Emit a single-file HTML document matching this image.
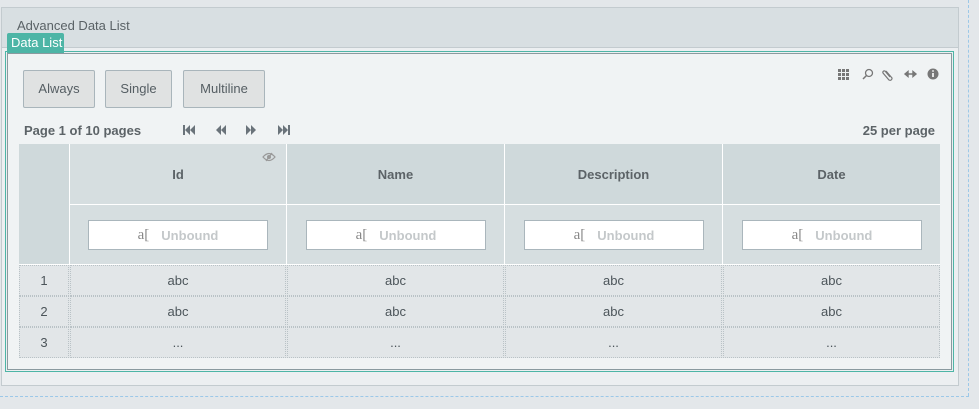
<!DOCTYPE html>
<html><head><meta charset="utf-8"><style>
*{margin:0;padding:0;box-sizing:border-box}
body{width:979px;height:409px;background:#e3e7ea;font-family:"Liberation Sans",sans-serif;position:relative;overflow:hidden}
.a{position:absolute}
.btn{position:absolute;top:70px;height:38px;background:#e0e2e2;border:1px solid #a9b5bb;border-radius:2px;font-size:13px;color:#555e63;display:flex;align-items:center;justify-content:center;padding-bottom:2px}
.c{position:absolute;display:flex;align-items:center;justify-content:center;font-size:13px;color:#4c555a}
.h{font-weight:bold;color:#5c6367}
.inp{position:absolute;top:220px;width:180px;height:30px;background:#fff;border:1px solid #aab6bc;font-size:13px;font-weight:bold;color:#c4c8ca;display:flex;align-items:center;justify-content:center}
.inp i{font-style:normal;font-weight:normal;color:#888;margin-right:12px;font-family:"Liberation Serif",serif;font-size:15px}
</style></head><body>
<div class="a" style="left:968px;top:0;width:0;height:396px;border-left:1px dashed #9cc8e8"></div>
<div class="a" style="left:0;top:396px;width:969px;height:0;border-top:1px dashed #9cc8e8"></div>
<div class="a" style="left:1px;top:7px;width:958px;height:379px;background:#eceff1;border:1px solid #c3cbcf"></div>
<div class="a" style="left:2px;top:8px;width:956px;height:40px;background:#d8dfe2;border-bottom:1px solid #c3cbcf"></div>
<div class="a" style="left:17px;top:18px;font-size:13px;color:#5a6266">Advanced Data List</div>
<div class="a" style="left:5px;top:51px;width:949px;height:321px;border:1px solid #4db5a6"></div>
<div class="a" style="left:7px;top:53px;width:945px;height:317px;border:1px solid #8a9a9f;background:#f0f3f4"></div>
<div class="a" style="left:7px;top:33px;width:57px;height:20px;background:#4db5a6;color:#fff;font-size:13px;padding:2px 0 0 4px;border-radius:2px 2px 0 0">Data List</div>
<div class="btn" style="left:23px;width:72px">Always</div>
<div class="btn" style="left:105px;width:67px">Single</div>
<div class="btn" style="left:183px;width:82px">Multiline</div>
<svg class="a" style="left:838px;top:67px" width="102" height="14" viewBox="0 0 102 14" fill="#777">
<g><rect x="0" y="2" width="3" height="3"/><rect x="4" y="2" width="3" height="3"/><rect x="8" y="2" width="3" height="3"/><rect x="0" y="6" width="3" height="3"/><rect x="4" y="6" width="3" height="3"/><rect x="8" y="6" width="3" height="3"/><rect x="0" y="10" width="3" height="3"/><rect x="4" y="10" width="3" height="3"/><rect x="8" y="10" width="3" height="3"/></g>
<circle cx="31" cy="6" r="3.5" fill="none" stroke="#777" stroke-width="1.3"/><line x1="28.5" y1="8.5" x2="25" y2="12" stroke="#777" stroke-width="1.5"/>
<path d="M48 4 l6 7 a2 2 0 0 1 -3 2 l-6-7 a1.5 1.5 0 0 1 2-2 l5 6" fill="none" stroke="#777" stroke-width="1.2"/>
<path d="M67 7h11M67 7l3-2.5v5zM78 7l-3-2.5v5z" stroke="#777" stroke-width="1.4"/>
<circle cx="95" cy="7" r="5.5"/><rect x="94.2" y="6" width="1.6" height="4" fill="#fff"/><circle cx="95" cy="4" r="0.9" fill="#fff"/>
</svg>
<div class="a" style="left:24px;top:123px;font-size:13px;font-weight:bold;color:#5c6367">Page 1 of 10 pages</div>
<svg class="a" style="left:183px;top:124px" width="110" height="12" viewBox="0 0 110 12" fill="#6a737a">
<rect x="0" y="1" width="2" height="10"/><path d="M2 6l5-5v10zM7 6l5-5v10z"/>
<path d="M33 6l5-5v10zM38 6l5-5v10z"/>
<path d="M63 1l5 5-5 5zM68 1l5 5-5 5z"/>
<path d="M95 1l5 5-5 5zM100 1l5 5-5 5z"/><rect x="105" y="1" width="2" height="10"/>
</svg>
<div class="a" style="right:44px;top:123px;font-size:13px;font-weight:bold;color:#5c6367">25 per page</div>
<div class="a" style="left:19px;top:144px;width:921px;height:214px;background:#fff"></div>
<div class="a" style="left:19px;top:144px;width:50px;height:120px;background:#cfd9db"></div>
<div class="a" style="left:70px;top:144px;width:216px;height:60px;background:#d6dee0"></div>
<div class="a" style="left:287px;top:144px;width:217px;height:60px;background:#cfd9db"></div>
<div class="a" style="left:505px;top:144px;width:217px;height:60px;background:#cfd9db"></div>
<div class="a" style="left:723px;top:144px;width:217px;height:60px;background:#cfd9db"></div>
<div class="a" style="left:70px;top:205px;width:216px;height:59px;background:#d6dee0"></div>
<div class="a" style="left:287px;top:205px;width:217px;height:59px;background:#d6dee0"></div>
<div class="a" style="left:505px;top:205px;width:217px;height:59px;background:#d6dee0"></div>
<div class="a" style="left:723px;top:205px;width:217px;height:59px;background:#d6dee0"></div>
<div class="c h" style="left:70px;top:144px;width:216px;height:60px">Id</div>
<div class="c h" style="left:287px;top:144px;width:217px;height:60px">Name</div>
<div class="c h" style="left:505px;top:144px;width:217px;height:60px">Description</div>
<div class="c h" style="left:723px;top:144px;width:217px;height:60px">Date</div>
<svg class="a" style="left:262px;top:152px" width="14" height="10" viewBox="0 0 14 10"><path d="M1 5q6-7 12 0q-6 7-12 0z" fill="none" stroke="#999" stroke-width="1.2"/><circle cx="7" cy="5" r="2" fill="#999"/><line x1="4" y1="9" x2="10" y2="1" stroke="#999" stroke-width="1.2"/></svg>
<div class="inp" style="left:88px"><i>a[</i>Unbound</div>
<div class="inp" style="left:306px"><i>a[</i>Unbound</div>
<div class="inp" style="left:524px"><i>a[</i>Unbound</div>
<div class="inp" style="left:742px"><i>a[</i>Unbound</div>
<div class="a" style="left:19px;top:265px;width:921px;height:93px;background:#e2e6e8"></div>
<div id="rows"></div>
<script>
var cols=[[19,50],[70,216],[287,217],[505,217],[723,217]],rows=[[265,'1','abc'],[296,'2','abc'],[327,'3','...']],h='';
rows.forEach(function(r){cols.forEach(function(c,i){h+='<div class="c" style="left:'+c[0]+'px;top:'+r[0]+'px;width:'+c[1]+'px;height:31px;border:1px dotted #b9c2c6;padding-bottom:1px">'+(i?r[2]:r[1])+'</div>';});});
document.getElementById('rows').innerHTML=h;
</script>
</body></html>
